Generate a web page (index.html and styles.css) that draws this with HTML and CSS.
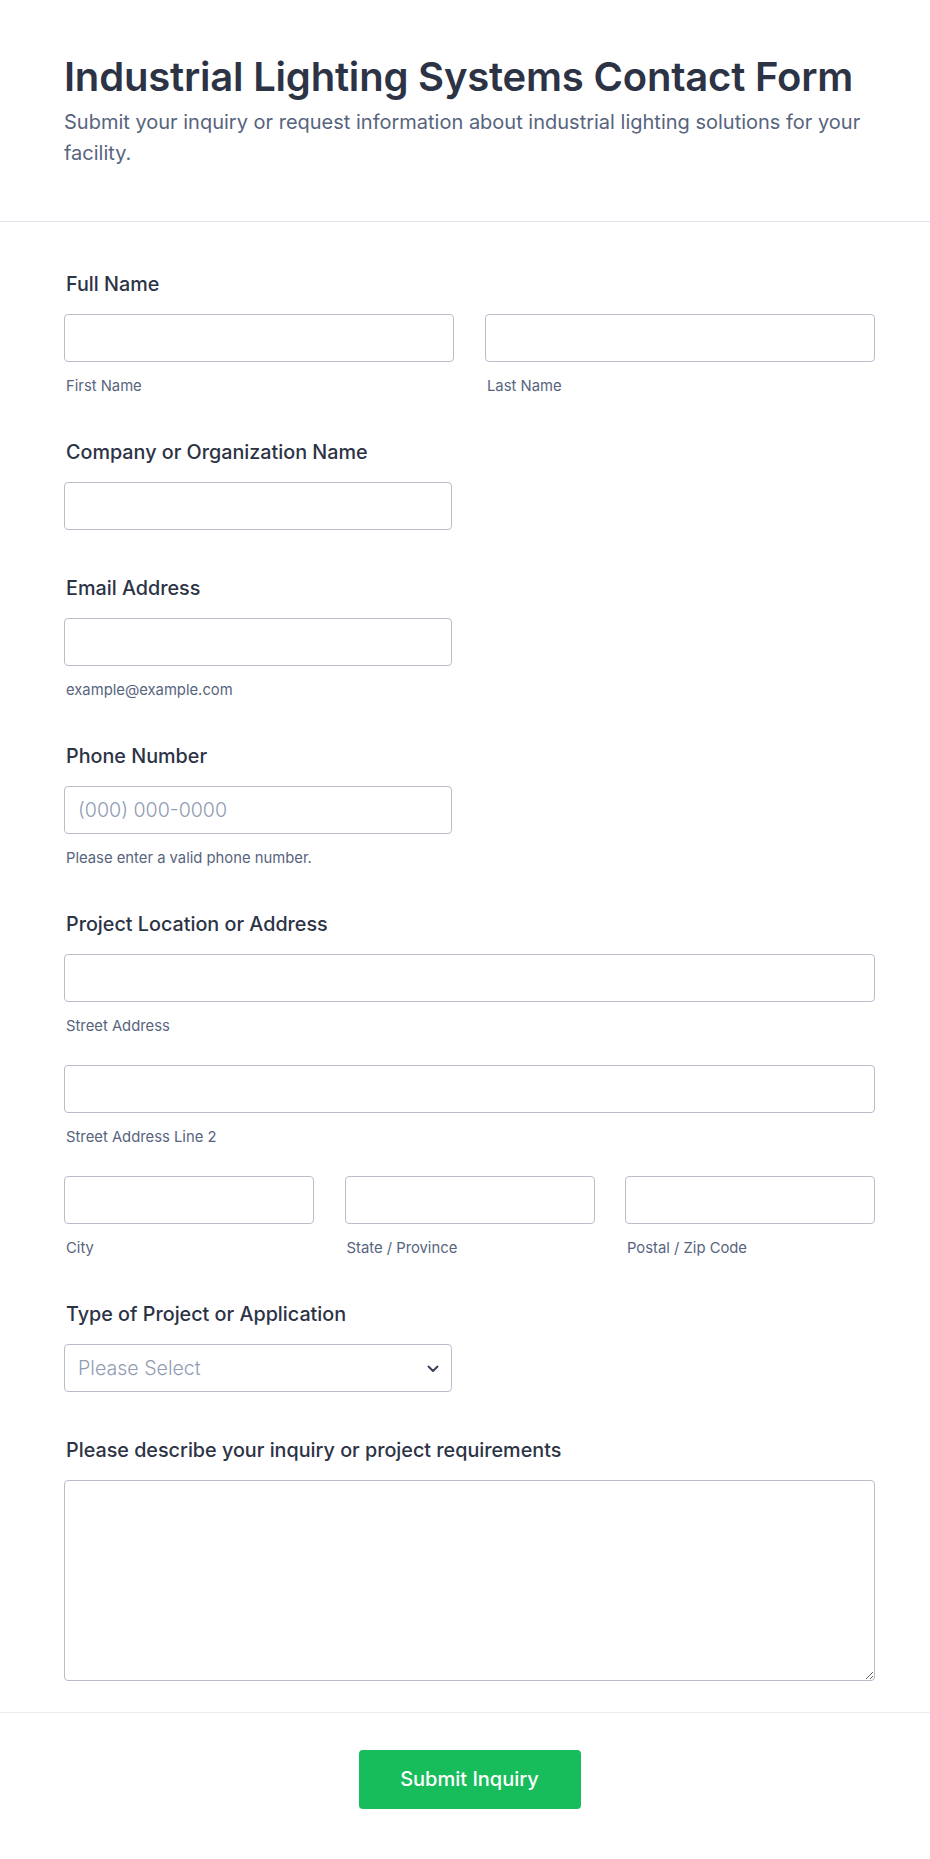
FILE: index.html
```html
<!DOCTYPE html>
<html lang="en">
<head>
<meta charset="utf-8">
<title>Industrial Lighting Systems Contact Form</title>
<link rel="stylesheet" href="styles.css">
</head>
<body>
<main class="form">
  <header class="form-header">
    <h1 class="form-title">Industrial Lighting Systems Contact Form</h1>
    <p class="form-subtitle">Submit your inquiry or request information about industrial lighting solutions for your facility.</p>
  </header>

  <section class="form-body">
    <div class="field">
      <label class="label">Full Name</label>
      <div class="row row-2">
        <div class="sub"><input class="input" type="text"><span class="sublabel">First Name</span></div>
        <div class="sub"><input class="input" type="text"><span class="sublabel">Last Name</span></div>
      </div>
    </div>

    <div class="field">
      <label class="label">Company or Organization Name</label>
      <input class="input half" type="text">
    </div>

    <div class="field">
      <label class="label">Email Address</label>
      <input class="input half" type="email">
      <span class="sublabel">example@example.com</span>
    </div>

    <div class="field">
      <label class="label">Phone Number</label>
      <input class="input half" type="tel" placeholder="(000) 000-0000">
      <span class="sublabel">Please enter a valid phone number.</span>
    </div>

    <div class="field">
      <label class="label">Project Location or Address</label>
      <div class="stack">
        <div class="sub"><input class="input" type="text"><span class="sublabel">Street Address</span></div>
        <div class="sub"><input class="input" type="text"><span class="sublabel">Street Address Line 2</span></div>
        <div class="row row-3">
          <div class="sub"><input class="input" type="text"><span class="sublabel">City</span></div>
          <div class="sub"><input class="input" type="text"><span class="sublabel">State / Province</span></div>
          <div class="sub"><input class="input" type="text"><span class="sublabel">Postal / Zip Code</span></div>
        </div>
      </div>
    </div>

    <div class="field">
      <label class="label">Type of Project or Application</label>
      <div class="select-wrap half">
        <select class="input select">
          <option>Please Select</option>
        </select>
        <svg class="chevron" width="12" height="8" viewBox="0 0 12 8" aria-hidden="true"><path d="M1.5 1.5 L6 6 L10.5 1.5" fill="none" stroke="#3a4457" stroke-width="2" stroke-linecap="round" stroke-linejoin="round"/></svg>
      </div>
    </div>

    <div class="field">
      <label class="label">Please describe your inquiry or project requirements</label>
      <textarea class="input textarea"></textarea>
    </div>
  </section>

  <footer class="form-footer">
    <button class="submit" type="button">Submit Inquiry</button>
  </footer>
</main>
</body>
</html>
```

FILE: styles.css
```css
html, body {
  margin: 0;
  padding: 0;
  background: #ffffff;
}

body {
  font-family: Inter, "Noto Sans", "Liberation Sans", sans-serif;
  color: #2c3345;
}

.form {
  width: 100%;
}

.form-header {
  padding: 53px 55px 52px 64px;
  border-bottom: 1px solid #e3e5ee;
}

.form-title {
  margin: 0;
  font-size: 40px;
  line-height: 48px;
  font-weight: 600;
  color: #2c3345;
  letter-spacing: -0.2px;
}

.form-subtitle {
  margin: 5.5px 0 0;
  font-size: 20px;
  line-height: 31px;
  font-weight: 400;
  color: #57647e;
}

.form-body {
  padding: 51px 55px 31px 64px;
  display: flex;
  flex-direction: column;
  gap: 47px;
}

.field {
  display: flex;
  flex-direction: column;
}

.label {
  display: block;
  font-size: 19.75px;
  line-height: 23px;
  font-weight: 500;
  color: #2c3345;
  margin-bottom: 18px;
  padding-left: 2px;
}

.sub {
  display: flex;
  flex-direction: column;
}

.input {
  display: block;
  box-sizing: border-box;
  width: 100%;
  height: 48px;
  margin: 0;
  border: 1px solid #b8bdc9;
  border-radius: 4px;
  padding: 0 13px;
  background: #ffffff;
  font-family: Inter, "Noto Sans", "Liberation Sans", sans-serif;
  font-size: 19.6px;
  font-weight: 400;
  color: #2c3345;
  outline: none;
}

.input::placeholder {
  color: #8f9cb3;
  font-weight: 300;
}

.half {
  width: 388px;
}

.sublabel {
  display: block;
  margin-top: 17px;
  font-size: 14.8px;
  line-height: 15px;
  color: #57647e;
  padding-left: 2px;
}

.row {
  display: grid;
}

.row-2 {
  grid-template-columns: 1fr 1fr;
  column-gap: 31px;
}

.row-3 {
  grid-template-columns: 1fr 1fr 1fr;
  column-gap: 30.5px;
}

.stack {
  display: flex;
  flex-direction: column;
  gap: 31px;
}

.select-wrap {
  position: relative;
}

.select {
  appearance: none;
  -webkit-appearance: none;
  padding-left: 13px;
  color: #8f9cb3;
  font-weight: 300;
}

.chevron {
  position: absolute;
  right: 13px;
  top: 21px;
  pointer-events: none;
}

.textarea {
  height: 201px;
  resize: vertical;
  padding: 12px 13px;
}

.form-footer {
  border-top: 1px solid #ebedf2;
  padding: 37px 55px 50px 64px;
  display: flex;
  justify-content: center;
}

.submit {
  width: 222px;
  height: 59px;
  border: none;
  border-radius: 4px;
  background: #18bd5b;
  color: #ffffff;
  font-family: Inter, "Noto Sans", "Liberation Sans", sans-serif;
  font-size: 20px;
  font-weight: 500;
  cursor: pointer;
}
```
